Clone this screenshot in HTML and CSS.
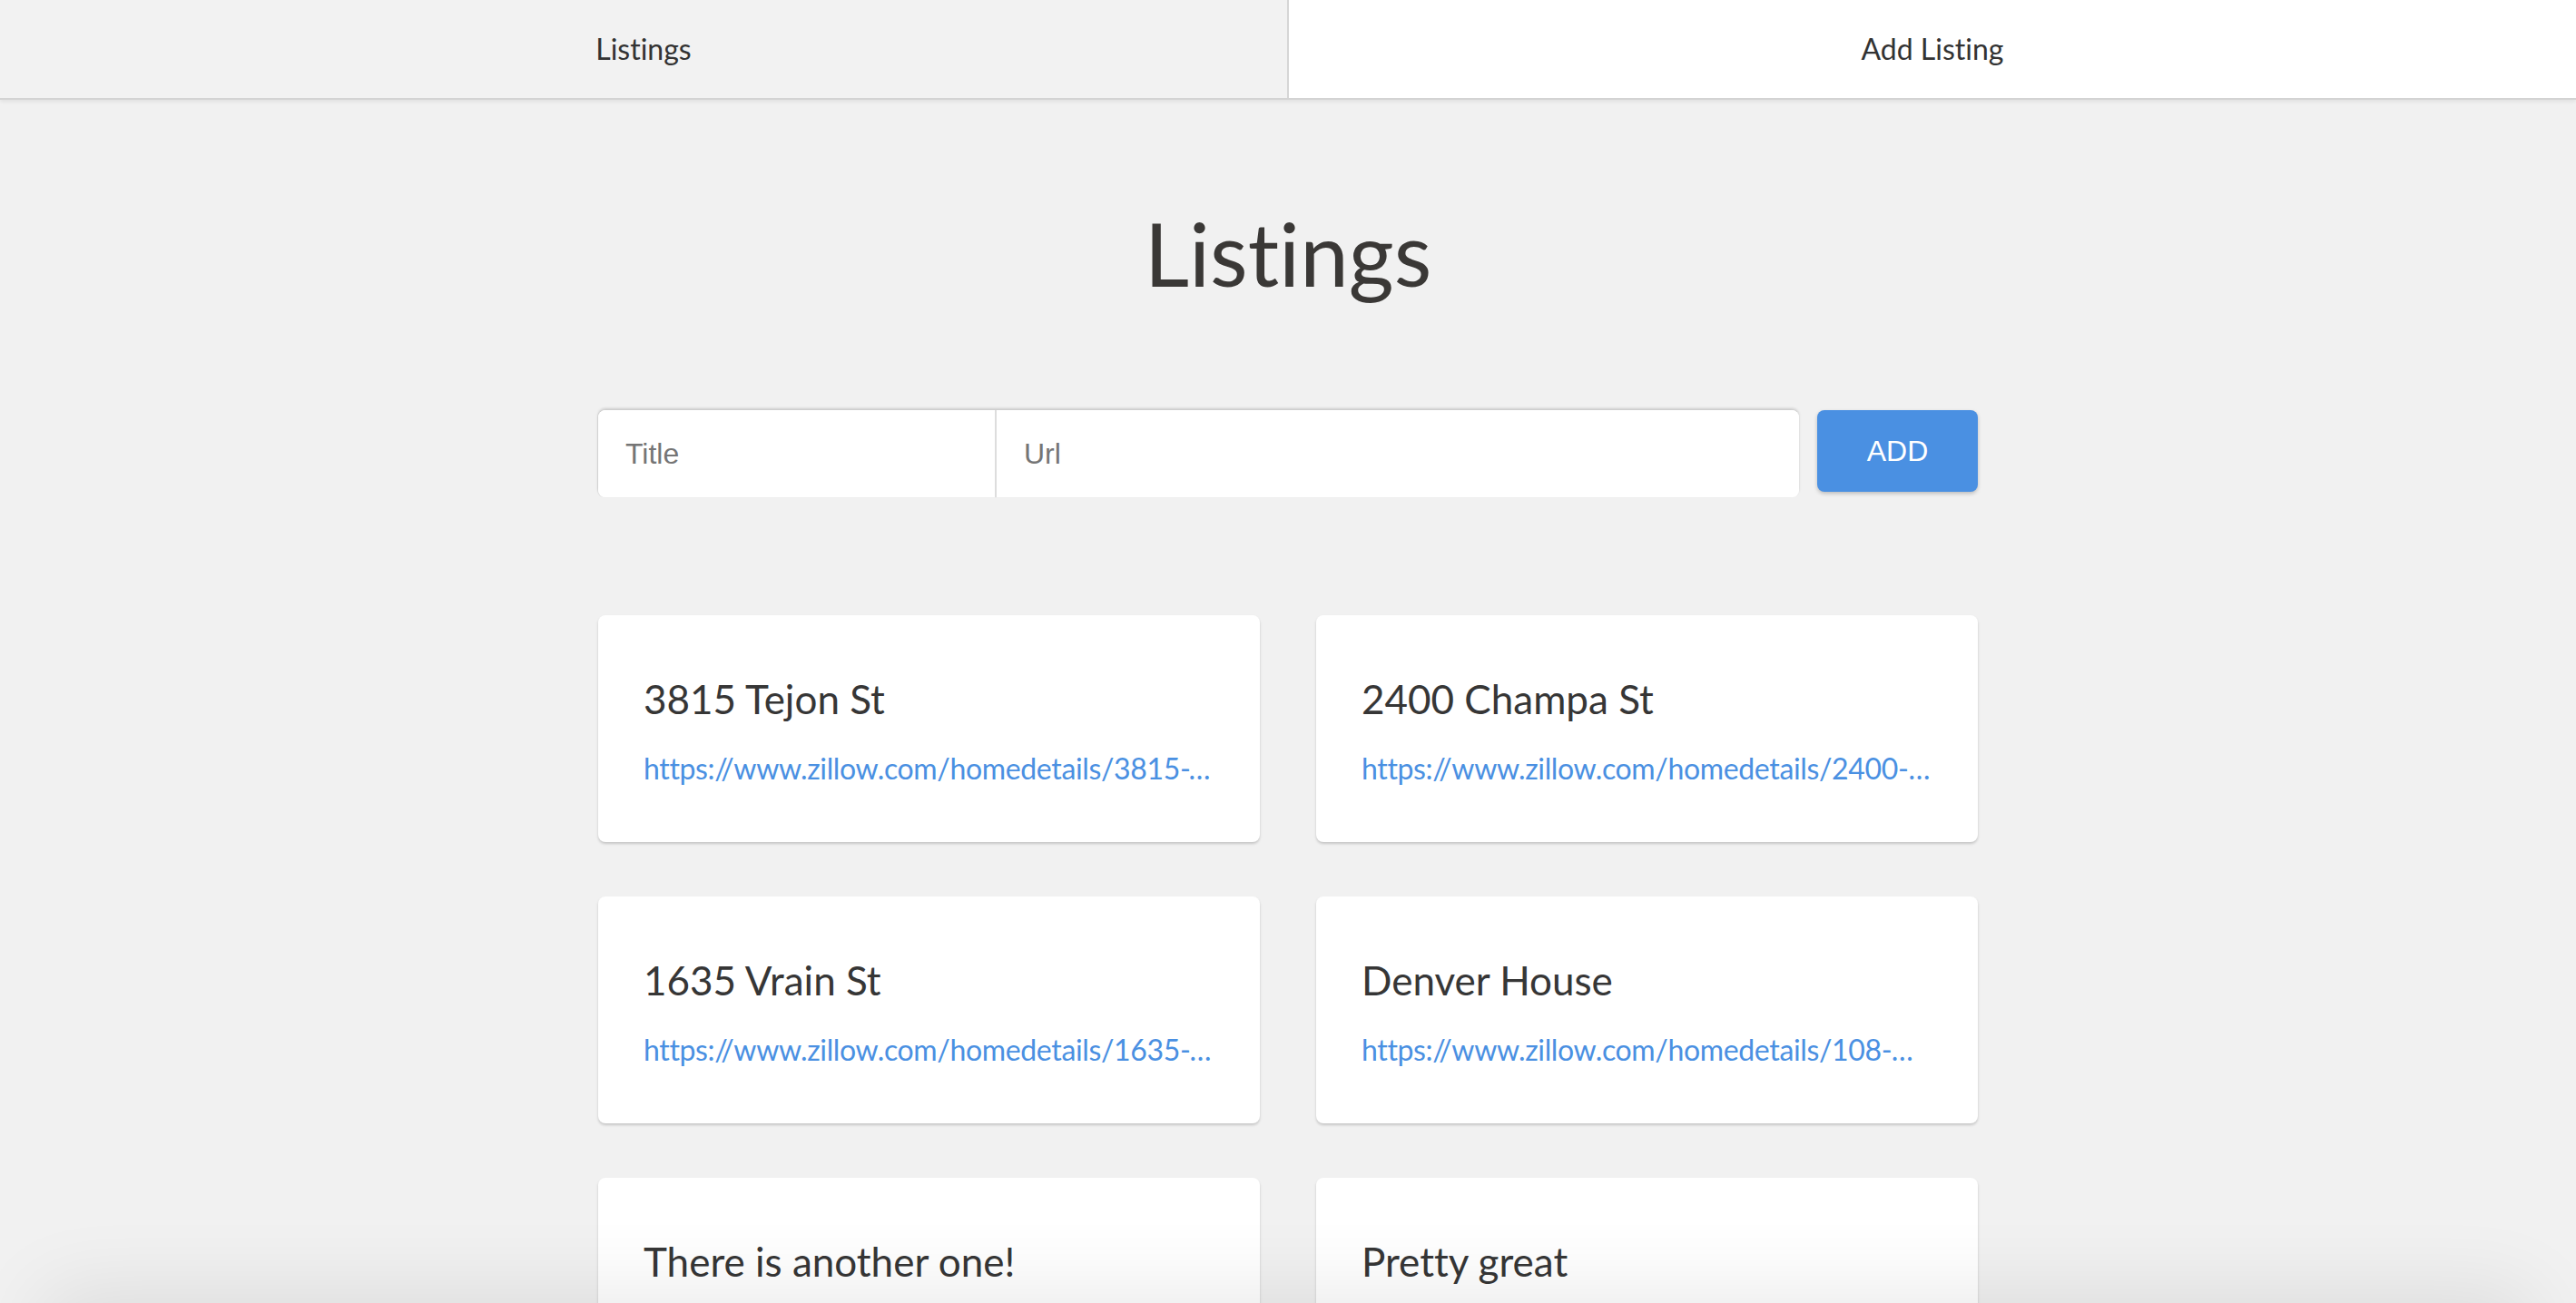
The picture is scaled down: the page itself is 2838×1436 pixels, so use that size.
FILE: index.html
```html
<!DOCTYPE html>
<html lang="en">
<head>
<meta charset="utf-8">
<title>Listings</title>
<link rel="stylesheet" href="styles.css">
</head>
<body>
<nav class="tabs">
  <a class="tab tab-active" href="#">Listings</a>
  <a class="tab" href="#">Add Listing</a>
</nav>
<main class="page">
  <h1 class="page-title">Listings</h1>
  <form class="add-form">
    <div class="input-group">
      <input class="field field-title" type="text" placeholder="Title">
      <input class="field field-url" type="text" placeholder="Url">
    </div>
    <button class="add-btn" type="button">ADD</button>
  </form>
  <ul class="cards">
    <li class="card">
      <h2 class="card-title">3815 Tejon St</h2>
      <a class="card-link" href="#">https://www.zillow.com/homedetails/3815-Tejon-St-Denver-CO-80211/13357418_zpid/</a>
    </li>
    <li class="card">
      <h2 class="card-title">2400 Champa St</h2>
      <a class="card-link" href="#">https://www.zillow.com/homedetails/2400-Champa-St-Denver-CO-80205/13340872_zpid/</a>
    </li>
    <li class="card">
      <h2 class="card-title">1635 Vrain St</h2>
      <a class="card-link" href="#">https://www.zillow.com/homedetails/1635-Vrain-St-Denver-CO-80204/13345211_zpid/</a>
    </li>
    <li class="card">
      <h2 class="card-title">Denver House</h2>
      <a class="card-link" href="#">https://www.zillow.com/homedetails/108-W-Ellsworth-Ave-Denver-CO-80223/13333029_zpid/</a>
    </li>
    <li class="card">
      <h2 class="card-title">There is another one!</h2>
      <a class="card-link" href="#">https://www.zillow.com/homedetails/2939-W-25th-Ave-Denver-CO-80211/13358310_zpid/</a>
    </li>
    <li class="card">
      <h2 class="card-title">Pretty great</h2>
      <a class="card-link" href="#">https://www.zillow.com/homedetails/1240-Clarkson-St-Denver-CO-80218/13347090_zpid/</a>
    </li>
  </ul>
</main>
<div class="bottom-fade"></div>
</body>
</html>
```
FILE: styles.css
```css
html, body {
  margin: 0;
  padding: 0;
}

body {
  background: #f1f1f1;
  font-family: Lato, "Noto Sans", "Liberation Sans", sans-serif;
  font-variant-ligatures: none;
  font-feature-settings: "liga" 0, "clig" 0;
  color: #3a3a3a;
  overflow: hidden;
  height: 100vh;
}

.tabs {
  display: flex;
  height: 108px;
  border-bottom: 2px solid #d3d3d3;
  box-shadow: 0 2px 4px rgba(0, 0, 0, 0.07);
  position: relative;
  z-index: 1;
}

.tab {
  flex: 1 1 0;
  display: flex;
  align-items: center;
  justify-content: center;
  font-size: 32px;
  line-height: 1.2;
  color: #333333;
  text-decoration: none;
  background: #ffffff;
}

.tab-active {
  background: #f2f2f2;
  border-right: 2px solid #d6d6d6;
}

.page {
  width: 1520px;
  margin: 0 auto;
}

.page-title {
  margin: 111px 0 0;
  font-size: 96px;
  font-weight: 400;
  line-height: 1.2;
  text-align: center;
  color: #3a3836;
}

.add-form {
  display: flex;
  align-items: flex-start;
  gap: 20px;
  margin-top: 116px;
}

.input-group {
  flex: 1;
  display: flex;
  height: 96px;
  background: #ffffff;
  border-radius: 8px;
  box-shadow: 0 -2px 3px rgba(0, 0, 0, 0.16), -1px 0 1px rgba(0, 0, 0, 0.08);
  overflow: hidden;
}

.field {
  border: none;
  outline: none;
  background: #ffffff;
  font-family: "Liberation Sans", Arial, sans-serif;
  font-size: 32px;
  color: #333333;
  padding: 0 30px;
  height: 100%;
  box-sizing: border-box;
  margin: 0;
}

.field::placeholder {
  color: #757575;
}

.field-title {
  width: 439px;
  flex: none;
  border-right: 2px solid #dddddd;
}

.field-url {
  flex: 1;
  min-width: 0;
}

.add-btn {
  width: 177px;
  height: 90px;
  flex: none;
  border: none;
  border-radius: 8px;
  background: #4a90e2;
  color: #ffffff;
  font-family: "Liberation Sans", Arial, sans-serif;
  font-size: 32px;
  box-shadow: 0 2px 4px rgba(0, 0, 0, 0.22);
  padding: 0;
  cursor: pointer;
}

.cards {
  list-style: none;
  margin: 130px 0 0;
  padding: 0;
  display: grid;
  grid-template-columns: 1fr 1fr;
  column-gap: 62px;
  row-gap: 60px;
}

.card {
  height: 250px;
  box-sizing: border-box;
  padding: 66px 50px 0;
  background: #ffffff;
  border-radius: 8px;
  box-shadow: 0 2px 3px rgba(0, 0, 0, 0.18);
  min-width: 0;
}

.card-title {
  margin: 0;
  font-size: 44px;
  font-weight: 400;
  line-height: 1.2;
  color: #363636;
}

.card-link {
  display: block;
  margin-top: 31px;
  font-size: 32px;
  line-height: 1.2;
  letter-spacing: -0.35px;
  color: #4a90e2;
  text-decoration: none;
  white-space: nowrap;
  overflow: hidden;
  text-overflow: ellipsis;
}

.bottom-fade {
  position: fixed;
  left: 60px;
  right: 60px;
  top: 100%;
  height: 200px;
  box-shadow: 0 0 90px 12px rgba(0, 0, 0, 0.09);
  pointer-events: none;
  z-index: 5;
}
```
